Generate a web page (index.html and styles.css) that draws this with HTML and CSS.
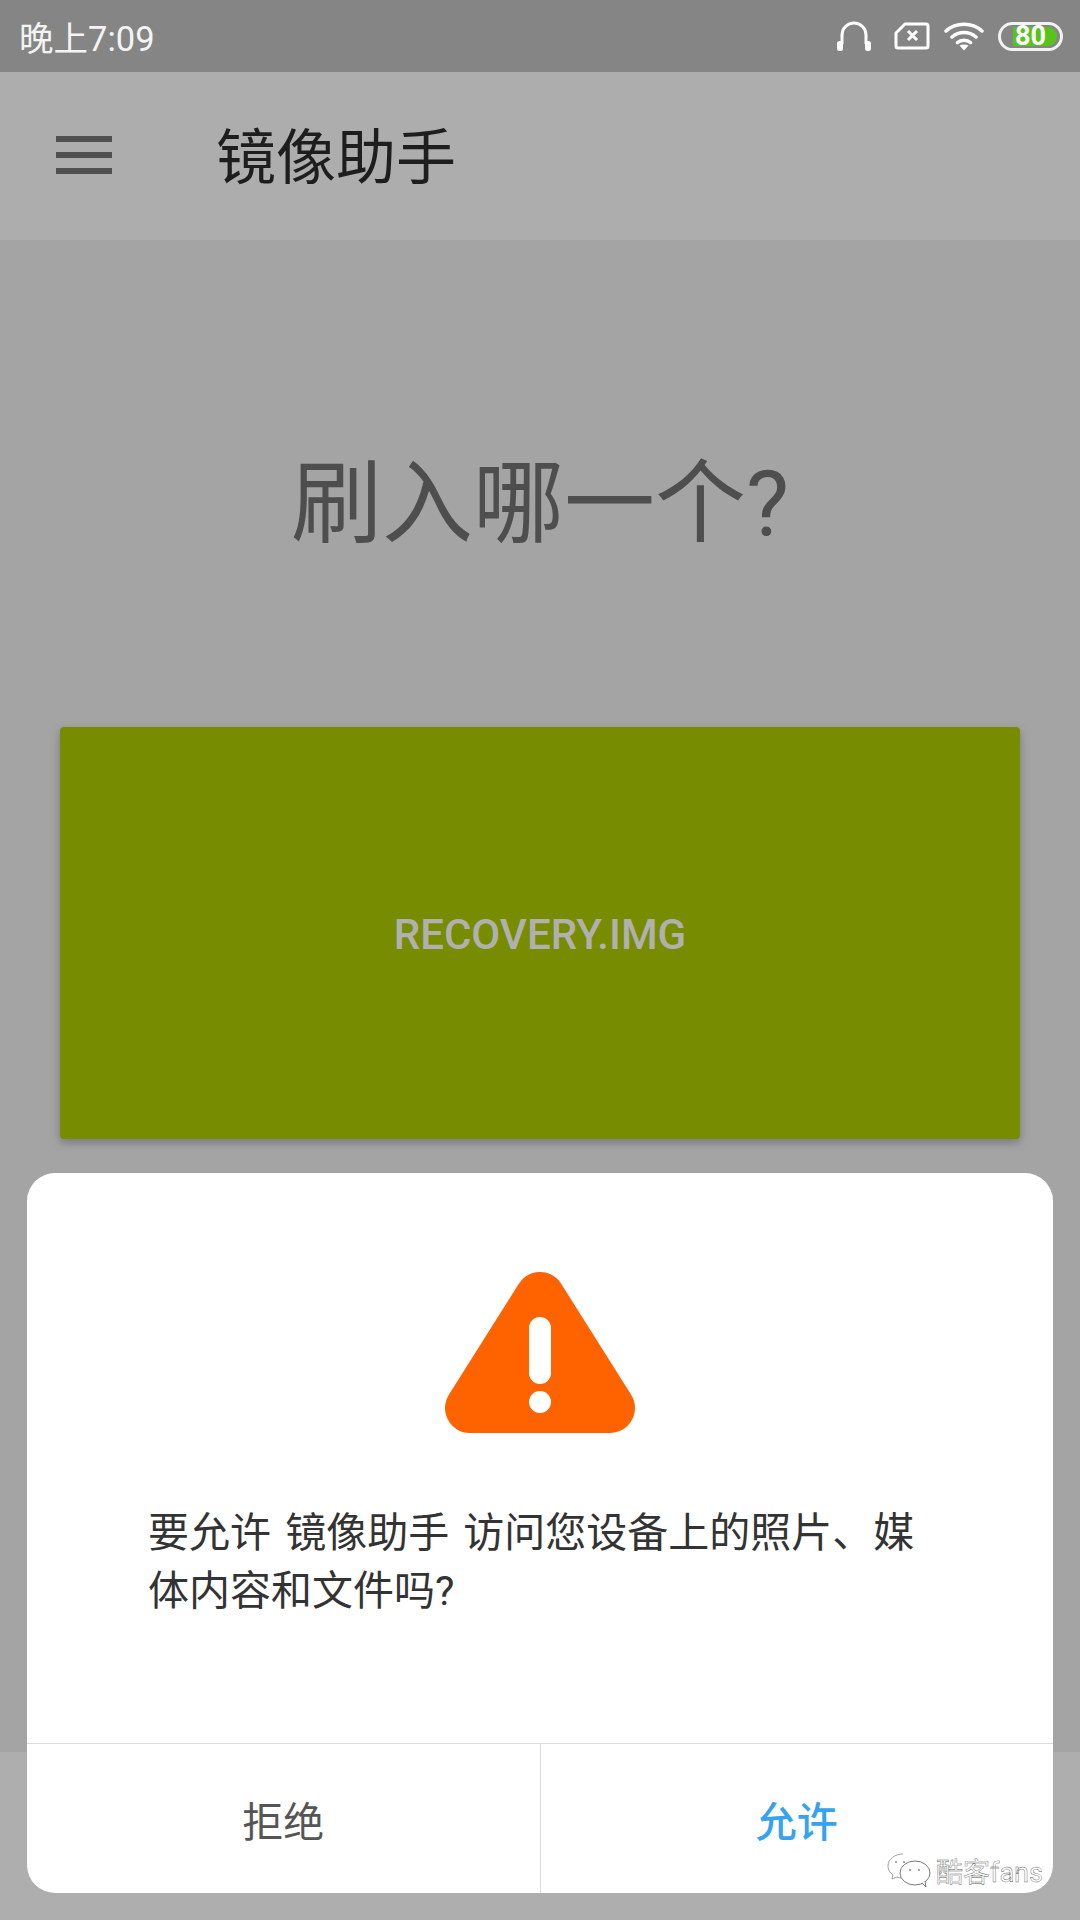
FILE: index.html
```html
<!DOCTYPE html>
<html lang="zh-CN">
<head>
  <meta charset="UTF-8" />
  <meta name="viewport" content="width=device-width, initial-scale=1.0"/>
  <title>镜像助手</title>
  <link rel="stylesheet" href="styles.css">
</head>
<body>
  <div class="screen">

    <div class="status-bar">
      <div class="status-time">晚上7:09</div>
      <div class="status-icons">
        <svg class="icon-headset" width="36" height="32" viewBox="0 0 36 32">
          <path d="M6 24V15a12 12 0 0 1 24 0v9" fill="none" stroke="#fff" stroke-width="3"/>
          <rect x="1" y="21" width="6" height="10" rx="2.5" fill="#fff"/>
          <rect x="29" y="21" width="6" height="10" rx="2.5" fill="#fff"/>
        </svg>
        <svg class="icon-sim" width="36" height="28" viewBox="0 0 36 28">
          <path d="M11 2H32a2 2 0 0 1 2 2V24a2 2 0 0 1-2 2H4a2 2 0 0 1-2-2V11z" fill="none" stroke="#fff" stroke-width="3" stroke-linejoin="round"/>
          <path d="M14 9l9 9M23 9l-9 9" fill="none" stroke="#fff" stroke-width="3"/>
        </svg>
        <svg class="icon-wifi" width="40" height="30" viewBox="0 0 40 30">
          <path d="M2 10C12 1 28 1 38 10M8 16C15 10 25 10 32 16M13.500 21.500C17 18.500 23 18.500 26.500 21.500" fill="none" stroke="#fff" stroke-width="3.500" stroke-linecap="round"/>
          <path d="M15.500 24.500C18 23 22 23 24.500 24.500L20 29.500z" fill="#fff"/>
        </svg>
        <div class="battery"><div class="battery-level">80</div></div>
      </div>
    </div>

    <div class="app-bar">
      <div class="menu-icon"><span></span><span></span><span></span></div>
      <div class="app-title">镜像助手</div>
    </div>

    <div class="question">刷入哪一个?</div>

    <div class="image-card">RECOVERY.IMG</div>

    <div class="spacer"></div>
    <div class="bottom-bar"></div>

    <div class="dialog">
      <div class="dialog-icon">
        <svg width="190" height="161" viewBox="0 0 190 161">
          <polygon points="95,25 25,136 165,136" fill="#ff6300" stroke="#ff6300" stroke-width="50" stroke-linejoin="round"/>
          <rect x="84" y="45" width="22" height="67" rx="11" fill="#fff"/>
          <circle cx="95" cy="130" r="11" fill="#fff"/>
        </svg>
      </div>
      <p class="dialog-text">要允许 镜像助手 访问您设备上的照片、媒体内容和文件吗?</p>
      <div class="dialog-actions">
        <div class="dialog-btn">拒绝</div>
        <div class="dialog-btn allow">允许</div>
      </div>
    </div>

    <div class="watermark">
      <svg width="44" height="36" viewBox="0 0 44 36">
        <path d="M16 1C8 1 1 6 1 13c0 4 2 7 5 9l-1 4 5-2c2 1 4 1 6 1" fill="#fff" stroke="#777" stroke-width="0.700"/>
        <ellipse cx="28" cy="20" rx="15" ry="12" fill="#fff" stroke="#555" stroke-width="0.800"/>
        <path d="M35 30l4 4-1-6" fill="#fff" stroke="#555" stroke-width="0.800"/>
        <path d="M9 8v2M17 8v2M23 16v2M32 16v2" stroke="#555" stroke-width="1"/>
      </svg>
      <span class="watermark-text">酷客fans</span>
    </div>

  </div>
</body>
</html>
```

FILE: styles.css
```css
* {
  box-sizing: border-box;
}

body {
  margin: 0;
  padding: 0;
  font-family: Roboto, "Noto Sans CJK SC", sans-serif;
}

.screen {
  width: 1080px;
  height: 1920px;
  background-color: #a4a4a4;
  display: flex;
  flex-direction: column;
  position: relative;
  overflow: hidden;
}

.status-bar {
  height: 72px;
  background-color: #858585;
  display: flex;
  align-items: center;
  justify-content: space-between;
  padding: 0 17px 0 19px;
}

.status-time {
  font-size: 34.500px;
  color: #f4f4f4;
}

.status-icons {
  display: flex;
  align-items: center;
  gap: 14px;
}

.icon-headset {
  margin-right: 8px;
}

.battery {
  width: 65px;
  height: 29px;
  border: 3px solid #f2f2f2;
  border-radius: 15px;
  padding: 2px 3px 2px 12px;
  display: flex;
}

.battery-level {
  flex: 1;
  background-color: #57c41c;
  border-radius: 0 9px 9px 0;
  color: #fff;
  font-size: 27px;
  font-weight: 700;
  line-height: 19px;
  padding-left: 2px;
}

.app-bar {
  height: 168px;
  background-color: #adadad;
  display: flex;
  align-items: center;
  gap: 104px;
  padding: 0 0 2px 56px;
}

.menu-icon {
  width: 56px;
  display: flex;
  flex-direction: column;
  gap: 10px;
}

.menu-icon span {
  height: 6px;
  background-color: #4f4f4f;
}

.app-title {
  font-size: 60px;
  line-height: 84px;
  margin-top: 8px;
  color: #1e1e1e;
}

.question {
  height: 487px;
  padding-top: 193px;
  text-align: center;
  font-size: 91px;
  line-height: 142px;
  color: #4e4e4e;
}

.image-card {
  height: 412px;
  margin: 0 60px;
  padding-top: 2px;
  background-color: #788c00;
  border-radius: 4px;
  box-shadow: 0 4px 8px rgba(60, 60, 80, 0.4);
  display: flex;
  align-items: center;
  justify-content: center;
  font-size: 42px;
  font-weight: 500;
  color: #b0b0b0;
}

.spacer {
  flex: 1;
}

.bottom-bar {
  height: 168px;
  background-color: #aeaeae;
}

.dialog {
  position: absolute;
  left: 27px;
  top: 1173px;
  width: 1026px;
  height: 720px;
  background-color: #fff;
  border-radius: 28px;
  display: flex;
  flex-direction: column;
}

.dialog-icon {
  padding-top: 99px;
  height: 260px;
  text-align: center;
}

.dialog-text {
  flex: 1;
  margin: 0;
  padding: 71px 121px 0;
  font-size: 41px;
  line-height: 58px;
  word-spacing: 4px;
  color: #333;
}

.dialog-actions {
  height: 150px;
  border-top: 1px solid #dcdcdc;
  display: flex;
}

.dialog-btn {
  flex: 1;
  display: flex;
  align-items: center;
  justify-content: center;
  font-size: 41px;
  color: #555;
}

.dialog-btn.allow {
  color: #36a3f0;
  font-weight: 500;
  border-left: 1px solid #dcdcdc;
}

.watermark {
  position: absolute;
  left: 887px;
  top: 1851px;
  display: flex;
  align-items: center;
  gap: 5px;
}

.watermark-text {
  font-size: 27px;
  color: #fff;
  -webkit-text-stroke: 0.4px #555;
}
```
